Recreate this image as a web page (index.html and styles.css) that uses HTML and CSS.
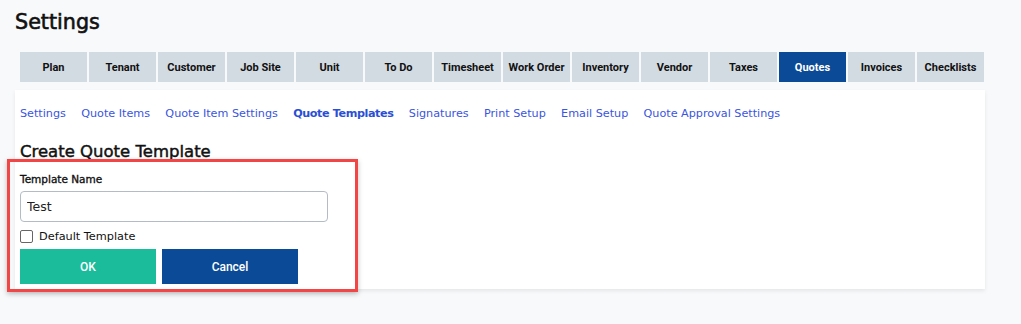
FILE: index.html
```html
<!DOCTYPE html>
<html>
<head>
<meta charset="utf-8">
<link rel="stylesheet" href="styles.css">
</head>
<body>
<div class="page">
  <h1 class="title">Settings</h1>
  <nav class="tabs">
    <div class="tab">Plan</div>
    <div class="tab">Tenant</div>
    <div class="tab">Customer</div>
    <div class="tab">Job Site</div>
    <div class="tab">Unit</div>
    <div class="tab">To Do</div>
    <div class="tab">Timesheet</div>
    <div class="tab">Work Order</div>
    <div class="tab">Inventory</div>
    <div class="tab">Vendor</div>
    <div class="tab">Taxes</div>
    <div class="tab active">Quotes</div>
    <div class="tab">Invoices</div>
    <div class="tab">Checklists</div>
  </nav>
  <div class="card">
    <div class="sublinks">
      <a>Settings</a>
      <a>Quote Items</a>
      <a>Quote Item Settings</a>
      <a class="current">Quote Templates</a>
      <a>Signatures</a>
      <a>Print Setup</a>
      <a>Email Setup</a>
      <a>Quote Approval Settings</a>
    </div>
    <h2 class="form-title">Create Quote Template</h2>
    <form class="form">
      <label class="label">Template Name</label>
      <input class="input" type="text" value="Test">
      <label class="check"><span class="box"></span>Default Template</label>
      <div class="buttons">
        <button type="button" class="btn ok">OK</button>
        <button type="button" class="btn cancel">Cancel</button>
      </div>
      <div class="highlight"></div>
    </form>
  </div>
</div>
</body>
</html>
```

FILE: styles.css
```css
* { box-sizing: border-box; }
html, body { margin: 0; padding: 0; }
body {
  background: #f8f9fb;
  font-family: "DejaVu Sans", "Open Sans", sans-serif;
  width: 1021px;
  height: 324px;
  overflow: hidden;
}
.page {
  padding: 10px 36px 0 15px;
}
.title {
  margin: 0;
  font-size: 20.7px;
  font-weight: 400;
  -webkit-text-stroke: 0.6px #111;
  color: #111;
  height: 42px;
  line-height: 24px;
}
.tabs {
  display: flex;
  gap: 2px;
  margin-left: 5px;
  height: 30px;
}
.tab {
  width: 67px;
  height: 30px;
  background: #d3dbe2;
  display: flex;
  align-items: center;
  justify-content: center;
  font-family: Roboto, "Liberation Sans", sans-serif;
  font-weight: 700;
  font-size: 11px;
  color: #111;
  white-space: nowrap;
}
.tab.active {
  background: #0b4a96;
  color: #fff;
}
.card {
  margin-top: 8px;
  width: 970px;
  height: 199px;
  background: #fff;
  box-shadow: 0 2px 4px rgba(0,0,0,0.08);
  padding: 0 5px;
}
.sublinks {
  display: flex;
  gap: 15.3px;
  height: 46px;
  align-items: center;
  font-size: 11.2px;
  padding-top: 1px;
}
.sublinks a {
  color: #3a55e0;
  white-space: nowrap;
}
.sublinks a.current {
  font-weight: 700;
  color: #2a4fd6;
  letter-spacing: -0.4px;
}
.form-title {
  margin: 0;
  font-size: 16.5px;
  font-weight: 400;
  -webkit-text-stroke: 0.45px #111;
  color: #111;
  height: 33px;
  line-height: 32px;
}
.form {
  position: relative;
  display: flex;
  flex-direction: column;
  align-items: flex-start;
  width: 308px;
}
.label {
  font-size: 10.5px;
  font-weight: 400;
  -webkit-text-stroke: 0.35px #111;
  color: #111;
  height: 14px;
  line-height: 14px;
  margin-top: 3px;
}
.input {
  margin-top: 5px;
  width: 308px;
  height: 31px;
  border: 1px solid #b3bcc6;
  border-radius: 4px;
  font-family: "DejaVu Sans", sans-serif;
  font-size: 12.5px;
  padding: 0 6px;
  color: #222;
  outline: none;
}
.check {
  display: flex;
  align-items: center;
  gap: 6px;
  font-size: 11.3px;
  color: #111;
  height: 14px;
  margin-top: 7px;
}
.box {
  width: 13px;
  height: 13px;
  border: 1px solid #666;
  border-radius: 2px;
  background: #fff;
  flex: none;
}
.buttons {
  display: flex;
  gap: 6px;
  margin-top: 6px;
}
.btn {
  width: 136px;
  height: 35px;
  border: none;
  color: #fff;
  font-family: Roboto, "Liberation Sans", sans-serif;
  font-size: 12px;
  font-weight: 500;
  padding: 0;
}
.btn.ok { background: #1abc9c; }
.btn.cancel { background: #0b4a96; }
.highlight {
  position: absolute;
  left: -13px;
  top: -10px;
  width: 351px;
  height: 133px;
  border: 3px solid #f24545;
  box-shadow: 0 2px 5px rgba(0,0,0,0.25);
  pointer-events: none;
}
```
